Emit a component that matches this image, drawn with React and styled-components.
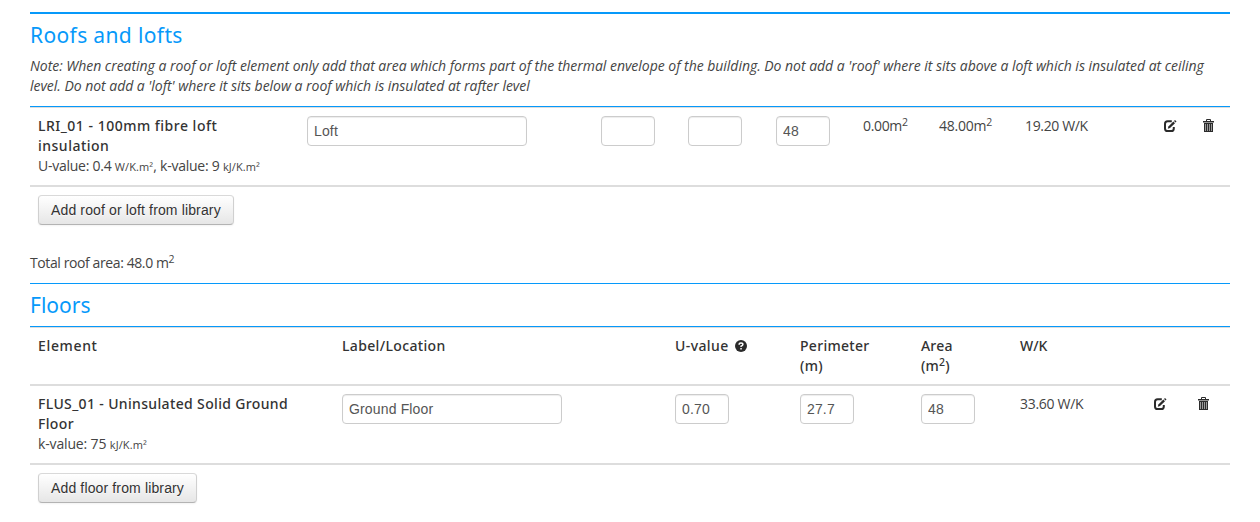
import React from "react";
import styled, { createGlobalStyle } from "styled-components";

const BLUE = "#0699fa";

const GlobalStyle = createGlobalStyle`
  * { box-sizing: border-box; }
  body {
    margin: 0;
    background: #fff;
    color: #333;
    font-family: "Open Sans", "Noto Sans", sans-serif;
    font-size: 14px;
    font-weight: 400;
    line-height: 20px;
    overflow: hidden;
  }
`;

const Page = styled.main`
  height: 522px;
  padding: 12px 30px 0;
`;

const SectionTitle = styled.h3`
  margin: 0;
  height: ${(p) => p.$height}px;
  border-top: ${(p) => p.$rule}px solid ${BLUE};
  padding-top: ${(p) => p.$top}px;
  color: ${BLUE};
  font-family: "Noto Sans", sans-serif;
  font-size: 21px;
  font-weight: 400;
  line-height: 24px;
  letter-spacing: ${(p) => p.$track}px;
`;

const Note = styled.p`
  margin: 0 0 10px;
  color: #444;
  font-style: italic;
  letter-spacing: -0.03px;
  white-space: nowrap;
`;

const Table = styled.div`
  border-top: 1px solid ${BLUE};
  box-shadow: inset 0 1px #ddd;
  padding-top: 1px;
`;

const Row = styled.div`
  display: grid;
  grid-template-columns: ${(p) => p.$columns};
  height: ${(p) => p.$height}px;
  border-bottom: 2px solid #ddd;
`;

const Cell = styled.div`
  padding: 8px 0 0 8px;
  color: #444;
  white-space: nowrap;
  letter-spacing: ${(p) => p.$track || 0}px;
`;

const HeadCell = styled(Cell)`
  color: #333;
  font-family: "Noto Sans", sans-serif;
  font-weight: 500;
`;

const Name = styled.div`
  color: #333;
  font-family: "Noto Sans", sans-serif;
  font-weight: 500;
  letter-spacing: ${(p) => p.$track}px;
`;

const Detail = styled.div`
  letter-spacing: ${(p) => p.$track}px;
`;

const Unit = styled.span`
  font-size: 11px;
  letter-spacing: ${(p) => p.$track || 0}px;
`;

const Sup = styled.sup`
  position: relative;
  top: -0.5em;
  font-size: 75%;
  line-height: 0;
  vertical-align: baseline;
`;

const Input = styled.input`
  display: block;
  width: ${(p) => p.$width}px;
  height: 30px;
  padding: 4px 6px;
  border: 1px solid #ccc;
  border-radius: 4px;
  background: #fff;
  box-shadow: inset 0 1px 1px rgba(0, 0, 0, 0.075);
  color: #555;
  font: 400 14px/20px "Liberation Sans", Arial, sans-serif;
  letter-spacing: 0.15px;
`;

const Button = styled.button`
  display: block;
  height: 30px;
  margin: 8px 0 0 8px;
  padding: 4px 12px;
  border: 1px solid #ccc;
  border-color: #d9d9d9 #d0d0d0 #b3b3b3;
  border-radius: 4px;
  background: linear-gradient(#fff, #e6e6e6);
  box-shadow: inset 0 1px 0 rgba(255, 255, 255, 0.2), 0 1px 2px rgba(0, 0, 0, 0.05);
  color: #333;
  font: 400 14px/20px "Liberation Sans", Arial, sans-serif;
  letter-spacing: 0.14px;
  text-shadow: 0 1px 1px rgba(255, 255, 255, 0.75);
`;

const Total = styled.p`
  margin: 28px 0 10px;
  color: #444;
  letter-spacing: -0.4px;
`;

const Icon = styled.svg`
  display: block;
  margin-top: 3px;
`;

const HelpIcon = styled.svg`
  display: inline-block;
  margin-left: 6px;
  vertical-align: -1px;
`;

function Edit() {
  return (
    <Icon width="14" height="14" viewBox="0 0 14 14">
      <path
        d="M8.8 2.3H4.6Q2 2.3 2 4.9V9.4Q2 12 4.6 12H8.2Q10.8 12 10.8 9.4V8"
        fill="none"
        stroke="#2b2b2b"
        strokeWidth="2"
      />
      <path d="M4.8 9.8 5.4 7.5 10.4 2.6 12 4.2 7 9.1Z" fill="#2b2b2b" />
      <path d="M11 2 12 1.1 13.5 2.6 12.6 3.5Z" fill="#2b2b2b" />
    </Icon>
  );
}

function Trash() {
  return (
    <Icon width="12" height="14" viewBox="0 0 12 14">
      <path d="M3.5 2.5V.5H7.5V2.5" fill="none" stroke="#2b2b2b" />
      <path d="M0 2H11V3.5H0Z" fill="#2b2b2b" />
      <path d="M1 4H10V13H1Z" fill="#2b2b2b" />
      <path d="M2.5 5V12M4.5 5V12M6.5 5V12M8.5 5V12" stroke="#999" />
    </Icon>
  );
}

function Help() {
  return (
    <HelpIcon width="12" height="12" viewBox="0 0 12 12">
      <circle cx="6" cy="6" r="6" fill="#2b2b2b" />
      <path d="M4.1 4.8Q4.1 3.1 6 3.1T7.9 4.6Q7.9 5.6 6.1 6.2V7.1" fill="none" stroke="#fff" strokeWidth="1.5" />
      <path d="M5.3 8H6.8V9.4H5.3Z" fill="#fff" />
    </HelpIcon>
  );
}

const ROOF_COLUMNS = "269px 294px 87px 88px 87px 76px 86px 138px 40px 35px";
const FLOOR_COLUMNS = "304px 333px 125px 121px 99px 133px 45px 40px";

export default function App() {
  return (
    <Page>
      <GlobalStyle />
      <SectionTitle $rule={2} $height={44} $top={9} $track={0.36}>Roofs and lofts</SectionTitle>
      <Note>
        Note: When creating a roof or loft element only add that area which forms part of the thermal envelope of the
        building. Do not add a 'roof' where it sits above a loft which is insulated at ceiling
        <br />
        level. Do not add a 'loft' where it sits below a roof which is insulated at rafter level
      </Note>
      <Table>
        <Row $columns={ROOF_COLUMNS} $height={79}>
          <Cell>
            <Name $track={0.5}>LRI_01 - 100mm fibre loft<br />insulation</Name>
            <Detail $track={-0.25}>
              U-value: 0.4 <Unit $track={0.1}>W/K.m²</Unit>, k-value: 9 <Unit $track={0.1}>kJ/K.m²</Unit>
            </Detail>
          </Cell>
          <Cell><Input $width={220} defaultValue="Loft" /></Cell>
          <Cell><Input $width={54} /></Cell>
          <Cell><Input $width={54} /></Cell>
          <Cell><Input $width={54} defaultValue="48" /></Cell>
          <Cell $track={-0.35}>0.00m<Sup>2</Sup></Cell>
          <Cell $track={-0.25}>48.00m<Sup>2</Sup></Cell>
          <Cell $track={-0.35}>19.20 W/K</Cell>
          <Cell><Edit /></Cell>
          <Cell><Trash /></Cell>
        </Row>
        <Button>Add roof or loft from library</Button>
      </Table>
      <Total>Total roof area: 48.0 m<Sup>2</Sup></Total>
      <SectionTitle $rule={1} $height={43} $top={9} $track={0}>Floors</SectionTitle>
      <Table>
        <Row $columns={FLOOR_COLUMNS} $height={58}>
          <HeadCell $track={0.65}>Element</HeadCell>
          <HeadCell $track={0.35}>Label/Location</HeadCell>
          <HeadCell $track={0.4}>U-value<Help /></HeadCell>
          <HeadCell $track={0.3}>Perimeter<br />(m)</HeadCell>
          <HeadCell $track={0.2}>Area<br />(m<Sup>2</Sup>)</HeadCell>
          <HeadCell>W/K</HeadCell>
        </Row>
        <Row $columns={FLOOR_COLUMNS} $height={79}>
          <Cell>
            <Name $track={0.35}>FLUS_01 - Uninsulated Solid Ground<br />Floor</Name>
            <Detail $track={-0.15}>
              k-value: 75 <Unit $track={0.1}>kJ/K.m²</Unit>
            </Detail>
          </Cell>
          <Cell><Input $width={220} defaultValue="Ground Floor" /></Cell>
          <Cell><Input $width={54} defaultValue="0.70" /></Cell>
          <Cell><Input $width={54} defaultValue="27.7" /></Cell>
          <Cell><Input $width={54} defaultValue="48" /></Cell>
          <Cell $track={-0.3}>33.60 W/K</Cell>
          <Cell><Edit /></Cell>
          <Cell><Trash /></Cell>
        </Row>
        <Button>Add floor from library</Button>
      </Table>
    </Page>
  );
}
